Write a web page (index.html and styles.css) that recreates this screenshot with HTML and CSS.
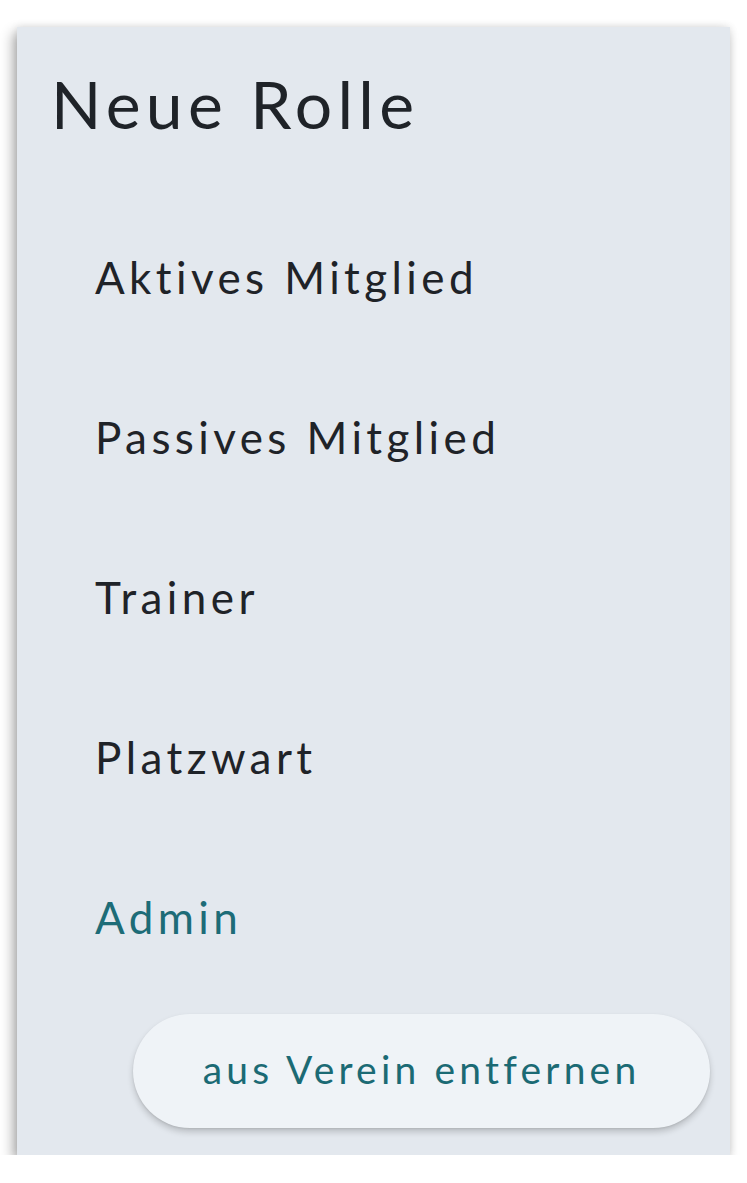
FILE: index.html
```html
<!DOCTYPE html>
<html lang="de">
<head>
<meta charset="utf-8">
<title>Neue Rolle</title>
<link rel="stylesheet" href="styles.css">
</head>
<body>
<div class="panel">
  <h1 class="title">Neue Rolle</h1>
  <ul class="roles">
    <li class="role">Aktives Mitglied</li>
    <li class="role">Passives Mitglied</li>
    <li class="role">Trainer</li>
    <li class="role">Platzwart</li>
    <li class="role role-active">Admin</li>
  </ul>
  <div class="actions">
    <button class="remove-btn">aus Verein entfernen</button>
  </div>
</div>
</body>
</html>
```
FILE: styles.css
```css
html, body {
  margin: 0;
  padding: 0;
  background: #ffffff;
}
body {
  font-family: Lato, "Noto Sans", sans-serif;
  padding: 27px 17px 0 17px;
}
.panel {
  width: 713px;
  height: 1128px;
  box-sizing: border-box;
  background: #e3e8ee;
  box-shadow: -4px 6px 12px rgba(0, 0, 0, 0.32), 0 0 8px rgba(0, 0, 0, 0.1);
  padding: 32px 20px 0 34px;
  display: flex;
  flex-direction: column;
}
.title {
  margin: 0;
  font-weight: 400;
  font-size: 66px;
  line-height: 90px;
  color: #1f2328;
  letter-spacing: 5.3px;
}
.roles {
  list-style: none;
  margin: 48px 0 0 0;
  padding: 0 0 0 44px;
}
.role {
  font-size: 44px;
  line-height: 160px;
  height: 160px;
  color: #1f2328;
  letter-spacing: 4.4px;
}
.role-active {
  color: #1d6c77;
}
.actions {
  display: flex;
  justify-content: flex-end;
  margin-top: 17px;
}
.remove-btn {
  width: 577px;
  height: 114px;
  border: none;
  border-radius: 57px;
  background: #eff3f7;
  box-shadow: 0 4px 6px rgba(0, 0, 0, 0.18), 0 1px 2px rgba(0, 0, 0, 0.08);
  font-family: Lato, "Noto Sans", sans-serif;
  font-size: 39px;
  color: #1b6a74;
  letter-spacing: 4.2px;
  padding: 0 0 4px 0;
}
```
